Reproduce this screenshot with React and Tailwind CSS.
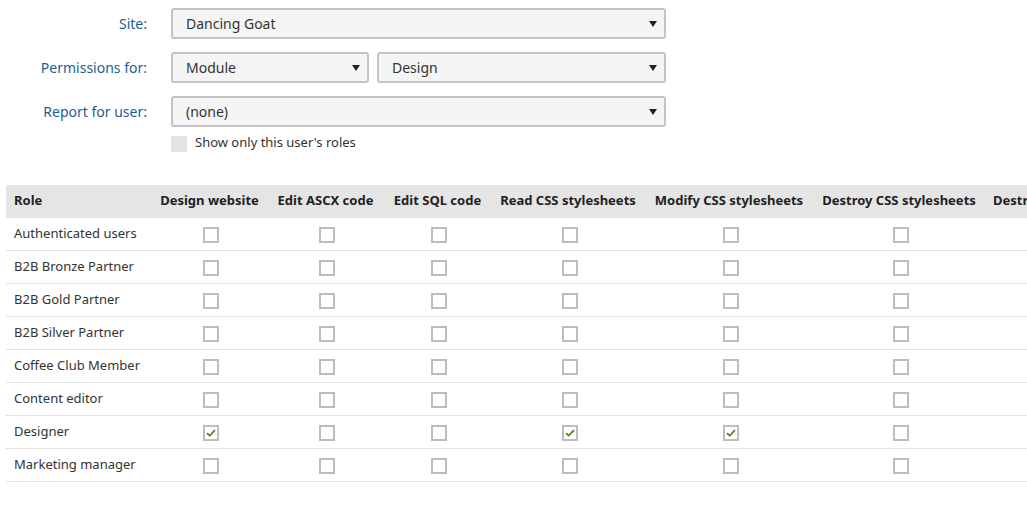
import React from 'react';

const font = { fontFamily: '"Noto Sans", "Open Sans", Arial, sans-serif' };

const columns = [
  { name: 'Design website', w: 'w-[115px] min-w-[115px]' },
  { name: 'Edit ASCX code', w: 'w-[117px] min-w-[117px]' },
  { name: 'Edit SQL code', w: 'w-[107px] min-w-[107px]' },
  { name: 'Read CSS stylesheets', w: 'w-[154px] min-w-[154px]' },
  { name: 'Modify CSS stylesheets', w: 'w-[168px] min-w-[168px]' },
  { name: 'Destroy CSS stylesheets', w: 'w-[172px] min-w-[172px]' },
  { name: 'Destroy ASCX code', w: '' },
];

const roles = [
  { name: 'Authenticated users', checked: [] },
  { name: 'B2B Bronze Partner', checked: [] },
  { name: 'B2B Gold Partner', checked: [] },
  { name: 'B2B Silver Partner', checked: [] },
  { name: 'Coffee Club Member', checked: [] },
  { name: 'Content editor', checked: [] },
  { name: 'Designer', checked: [0, 3, 4] },
  { name: 'Marketing manager', checked: [] },
];

const Arrow = () => (
  <svg width="8" height="6" viewBox="0 0 8 6" className="shrink-0">
    <path d="M0 0 L8 0 L4 6 Z" fill="#222" />
  </svg>
);

const Select = ({ value, className = '' }) => (
  <div
    className={`h-[31px] flex items-center justify-between pl-[13px] pr-[7px] bg-[#f5f5f5] border-2 border-[#c4c4c4] rounded-[3px] text-[14px] text-[#333] ${className}`}
  >
    <span>{value}</span>
    <Arrow />
  </div>
);

const Check = ({ checked }) => (
  <span className="inline-flex w-4 h-4 border-2 border-[#bdbdbd] bg-white items-center justify-center align-middle">
    {checked && (
      <svg width="10" height="8" viewBox="0 0 10 8">
        <path d="M1 4.2 L3.8 6.6 L9 1.2" fill="none" stroke="#55861f" strokeWidth="1.8" />
      </svg>
    )}
  </span>
);

const Label = ({ children }) => (
  <div className="w-[147px] text-right text-[14px] text-[#1d5e92] shrink-0">{children}</div>
);

export default function App() {
  return (
    <div className="bg-white min-h-screen w-full overflow-hidden" style={font}>
      <div className="pt-2 flex flex-col gap-[13px]">
        <div className="flex items-center gap-6">
          <Label>Site:</Label>
          <Select value="Dancing Goat" className="w-[495px]" />
        </div>
        <div className="flex items-center gap-6">
          <Label>Permissions for:</Label>
          <div className="flex gap-[8px]">
            <Select value="Module" className="w-[198px]" />
            <Select value="Design" className="w-[289px]" />
          </div>
        </div>
        <div className="flex items-center gap-6">
          <Label>Report for user:</Label>
          <Select value="(none)" className="w-[495px]" />
        </div>
      </div>
      <div className="flex items-center mt-[8px] ml-[171px] gap-2">
        <span className="w-4 h-4 bg-[#e4e4e4]" />
        <span className="text-[13px] text-[#333] -mt-[2px]">Show only this user's roles</span>
      </div>

      <div className="mt-[32px] ml-[6px] overflow-hidden">
        <table className="border-collapse text-[13px] text-[#333] whitespace-nowrap">
          <thead>
            <tr className="bg-[#e5e5e5] h-[33px]">
              <th className="w-[146px] min-w-[146px] text-left font-bold pl-2 text-[#222]">Role</th>
              {columns.map((c) => (
                <th key={c.name} className={`${c.w} text-center font-bold text-[#222] px-2`}>
                  {c.name}
                </th>
              ))}
            </tr>
          </thead>
          <tbody>
            {roles.map((r) => (
              <tr key={r.name} className="h-[33px] border-b border-[#e2e2e2]">
                <td className="pl-2">{r.name}</td>
                {columns.map((c, i) => (
                  <td key={c.name} className="text-center pl-[3px]">
                    <Check checked={r.checked.includes(i)} />
                  </td>
                ))}
              </tr>
            ))}
          </tbody>
        </table>
      </div>
    </div>
  );
}
